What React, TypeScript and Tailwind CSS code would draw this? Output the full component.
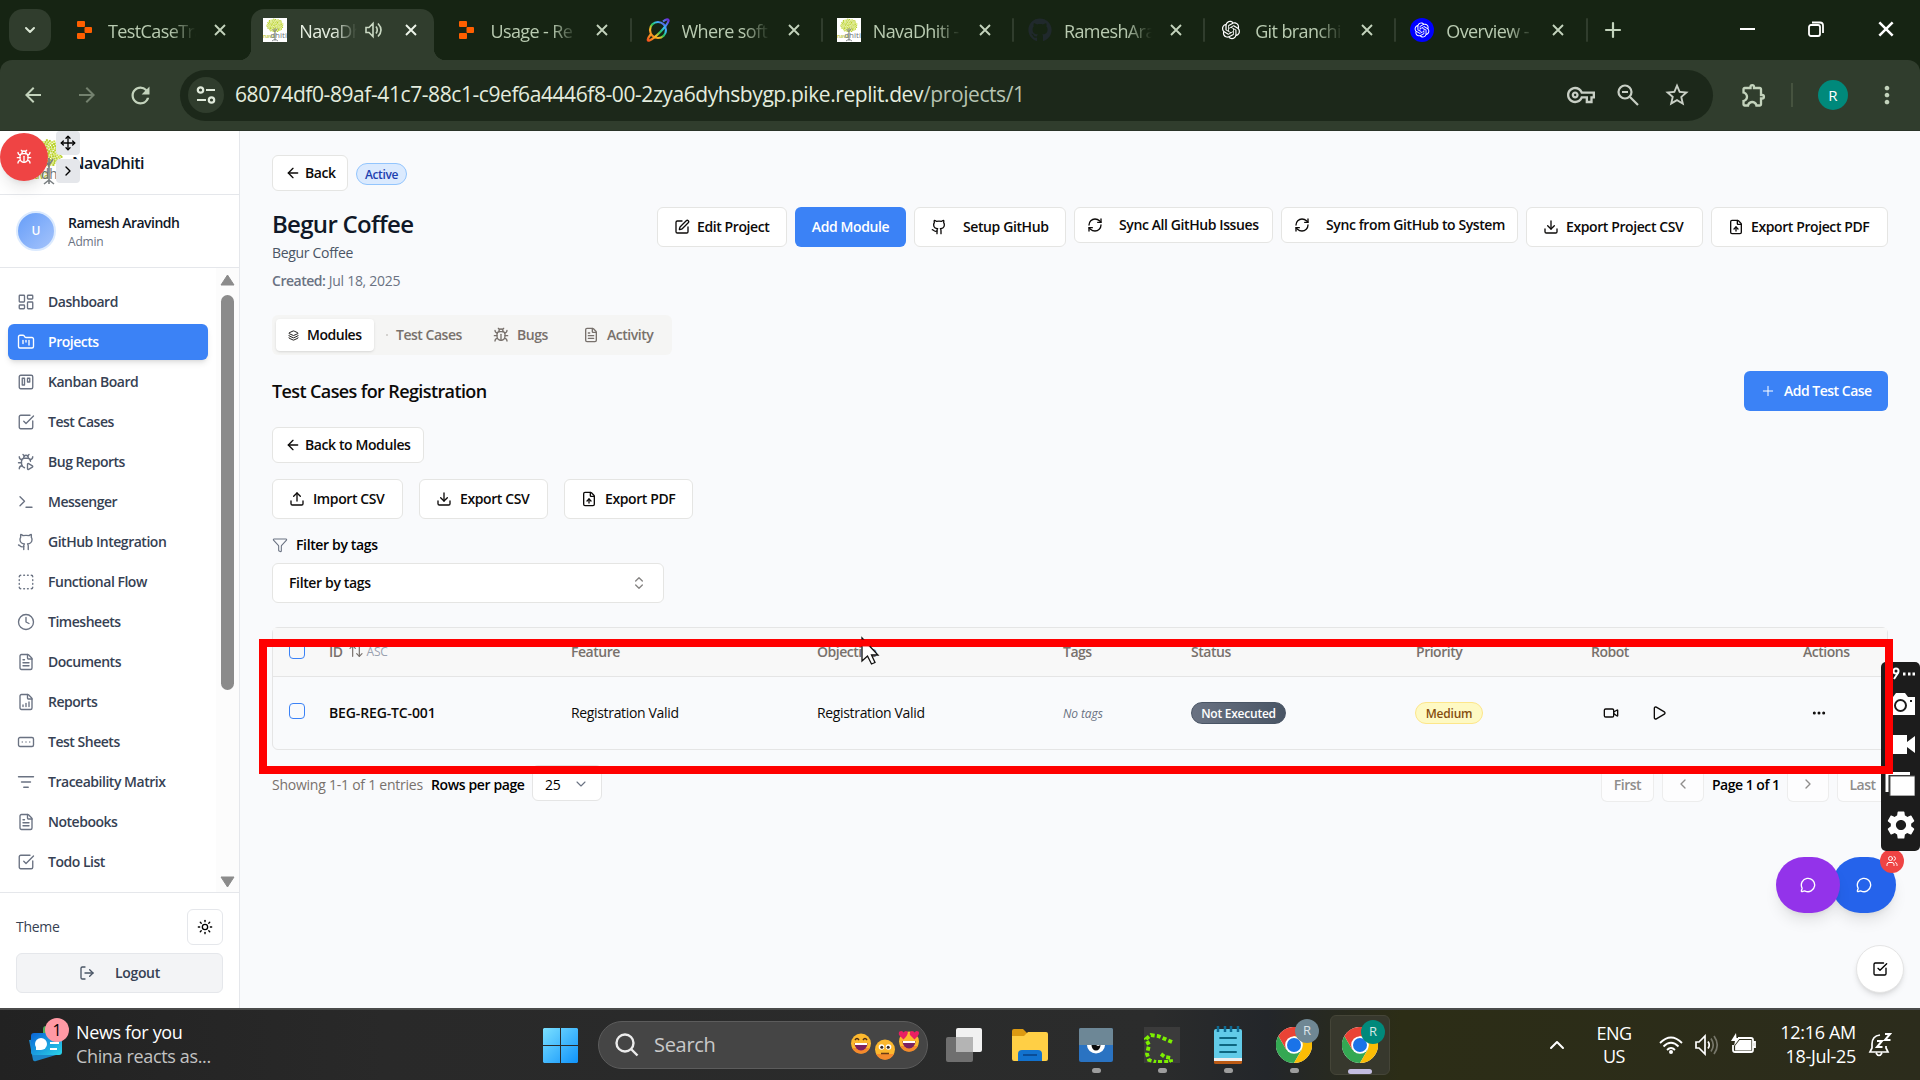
import React from "react";
import {
  ArrowLeft, ArrowUpDown, Bug, BugPlay, ChevronDown, ChevronLeft, ChevronRight, ChevronUp, ChevronsUpDown, Clock,
  Download, Ellipsis, FileChartColumnIncreasing, FileText, FileUp, Filter, FolderKanban, Github, Layers,
  LayoutDashboard, ListFilter, LogOut, MessageCircle, Move, Play, Plus, RectangleEllipsis, RefreshCw, SquareCheckBig,
  SquareDashed, SquarePen, Sun, Terminal, Trello, Upload, Users, Video,
} from "lucide-react";
import { MdArrowBack, MdArrowForward, MdMoreVert, MdOutlineExtension, MdOutlineVpnKey, MdRefresh, MdSettings, MdStarOutline } from "react-icons/md";
import { RiOpenaiFill } from "react-icons/ri";
import { FaGithub } from "react-icons/fa";

/* ---------- small drawings ---------- */

const dots = Array.from({ length: 110 }, (_, i) => {
  const a = i * 2.4;
  const r = Math.sqrt(i / 110) * 14;
  return { x: 20 + Math.cos(a) * r, y: 15 + Math.sin(a) * r * 0.95 };
});

function TreeLogo({ className }: { className: string }) {
  return (
    <svg viewBox="0 0 40 48" className={className} preserveAspectRatio="none">
      <rect width="40" height="48" fill="#fff" />
      {dots.map((d, i) => (
        <rect key={i} x={d.x - 1} y={d.y - 1} width="2" height="2" fill={i % 3 ? "#b9d12c" : "#cfe04a"} />
      ))}
      <path d="M20 46V20M20 28l-4-6M20 27l4-6M20 42l-5 4M20 42l5 4" stroke="#7b8083" strokeWidth="1.600" fill="none" />
      <text x="0" y="41" fontSize="12" fontWeight="600" textLength="20" lengthAdjust="spacingAndGlyphs" fill="#b9c637" fontFamily="Open Sans">nava</text>
      <text x="12" y="41" fontSize="14" textLength="28" lengthAdjust="spacingAndGlyphs" fill="#6f7478" fontFamily="Open Sans">dhiti</text>
    </svg>
  );
}

function ReplitMark() {
  return (
    <svg viewBox="0 0 24 24" className="size-6">
      <rect x="5" y="3" width="8" height="6" rx="1" fill="#ff5f00" />
      <rect x="12.500" y="9" width="7.500" height="6" rx="1" fill="#ff5f00" />
      <rect x="5" y="15" width="8" height="6" rx="1" fill="#ff5f00" />
    </svg>
  );
}

function OrbitMark() {
  return (
    <svg viewBox="0 0 24 24" className="size-6" fill="none" strokeWidth="2.2">
      <defs>
        <linearGradient id="orbit" x1="0" y1="1" x2="1" y2="0">
          <stop offset="0" stopColor="#f4511e" />
          <stop offset=".3" stopColor="#fbbf24" />
          <stop offset=".5" stopColor="#22c55e" />
          <stop offset=".7" stopColor="#38bdf8" />
          <stop offset="1" stopColor="#6d28d9" />
        </linearGradient>
      </defs>
      <circle cx="12" cy="12" r="8" stroke="url(#orbit)" />
      <path d="M5 16C1 21 1 23.500 3.500 22.500C9 20 21 8 22.500 3C23 .5 20 1 17 3.500" stroke="url(#orbit)" />
    </svg>
  );
}

function ChromeLogo() {
  return (
    <svg viewBox="0 0 36 36" className="size-9">
      <circle cx="18" cy="18" r="18" fill="#fff" />
      <path d="M2.400 9L10.200 22.500L25.800 22.500L18 36A18 18 0 0 1 2.400 9Z" fill="#34a853" />
      <path d="M2.400 9A18 18 0 0 1 33.600 9H18L10.200 22.500Z" fill="#ea4335" />
      <path d="M18 9H33.600A18 18 0 0 1 18 36L25.800 22.500Z" fill="#fbbc05" />
      <circle cx="18" cy="18" r="8.800" fill="#fff" />
      <circle cx="18" cy="18" r="7" fill="#1a73e8" />
    </svg>
  );
}

function NewsIcon() {
  return (
    <svg viewBox="0 0 36 44" className="h-11 w-9">
      <defs>
        <linearGradient id="news" x1="0" y1="0" x2="1" y2="1">
          <stop offset="0" stopColor="#0a64d6" />
          <stop offset="1" stopColor="#2bd4e8" />
        </linearGradient>
      </defs>
      <rect x="15" y="8" width="16" height="14" rx="3" fill="#4cae5a" />
      <path d="M1 22L5 42Q6 44 8 43L28 37V20Z" fill="#1c86c9" />
      <rect x="3" y="15" width="31" height="22" rx="3" fill="url(#news)" />
      <circle cx="13" cy="26" r="6" fill="#fff" />
      <path d="M8 32V26H13V32Z" fill="#fff" />
      <path d="M22 25h9M22 31h7" stroke="#fff" strokeWidth="2.200" />
    </svg>
  );
}

function Face({ kind }: { kind: "grin" | "flat" | "love" }) {
  return (
    <svg viewBox="0 0 22 24" className="h-6 w-[22px]">
      <circle cx="11" cy="12.500" r="10" fill="#fcb82e" />
      <path d="M2 17a10 10 0 0 0 18 0" fill="#f58a2c" />
      {kind === "flat" ? (
        <g>
          <circle cx="7.500" cy="10" r="2.800" fill="#fff" />
          <circle cx="14.500" cy="10" r="2.800" fill="#fff" />
          <circle cx="7.800" cy="10.200" r="1.500" fill="#3b2a20" />
          <circle cx="14.200" cy="10.200" r="1.500" fill="#3b2a20" />
          <path d="M7 16.500h8" stroke="#6b3b14" strokeWidth="1.500" />
        </g>
      ) : (
        <>
          <path d="M4.500 12h13a6.500 7.500 0 0 1-13 0Z" fill="#7c2160" />
          <path d="M5 12h12v2h-12Z" fill="#fff" />
        </>
      )}
      {kind === "grin" && <path d="M5 9q2-3 4 0M13 9q2-3 4 0" stroke="#4a2c17" strokeWidth="1.400" fill="none" />}
      {kind === "love" && (
        <path d="M5.500 10.500L1 6Q0 2 3.500 2Q5 2 5.500 3.500Q7 1 9.500 2.500Q11 5 5.500 10.500ZM16.500 10.500L12 6Q11 2 14 2Q16 2 16.500 3.500Q18 1 20.500 2.500Q22.500 5 16.500 10.500Z" fill="#e91e63" />
      )}
    </svg>
  );
}

function XMark({ className }: { className: string }) {
  return (
    <svg viewBox="0 0 12 12" className={className} stroke="currentColor" strokeWidth="1.900">
      <path d="M1 1L11 11M11 1L1 11" />
    </svg>
  );
}

/* ---------- browser chrome ---------- */

type BrowserTab = { title: string; icon: React.ReactNode; active?: boolean; sep?: boolean };

const browserTabs: BrowserTab[] = [
  { title: "TestCaseTra", icon: <ReplitMark /> },
  { title: "NavaDh", icon: <TreeLogo className="size-6" />, active: true },
  { title: "Usage - Re", icon: <ReplitMark /> },
  { title: "Where soft", icon: <OrbitMark />, sep: true },
  { title: "NavaDhiti -", icon: <TreeLogo className="size-6" />, sep: true },
  { title: "RameshAra", icon: <FaGithub className="size-6 text-[#20292c]" />, sep: true },
  { title: "Git branchi", icon: <RiOpenaiFill className="size-[22px] text-white" />, sep: true },
  {
    title: "Overview -",
    icon: (
      <span className="flex size-6 items-center justify-center rounded-full bg-[#0000ff]">
        <RiOpenaiFill className="size-[18px] text-white" />
      </span>
    ),
    sep: true,
  },
];

function BrowserTabs() {
  return (
    <div className="flex h-[60px] bg-[#162413] pl-[9px]">
      <div className="mt-[9px] flex size-[42px] items-center justify-center rounded-[14px] bg-[#303d2d] text-[#dbe7d5]">
        <ChevronDown className="size-4" strokeWidth={3} />
      </div>
      <div className="ml-[5px] flex">
        {browserTabs.map((t, i) => (
          <div key={i} className="relative flex w-[191.200px] pt-[9px]">
            {t.sep && <span className="absolute left-0 top-[18px] h-6 w-[2px] rounded bg-[#303d2d]" />}
            {t.active && (
              <>
                <span className="absolute bottom-0 left-[-8px] size-3 bg-[radial-gradient(circle_at_top_left,transparent_12px,#303d2d_12.500px)]" />
                <span className="absolute bottom-0 right-[-8px] size-3 bg-[radial-gradient(circle_at_top_right,transparent_12px,#303d2d_12.500px)]" />
              </>
            )}
            <div className={t.active ? "mx-1 flex flex-1 items-start rounded-t-[13px] bg-[#303d2d] pl-3" : "mx-1 flex flex-1 items-start pl-3"}>
              <span className="mt-[9px] flex size-6 shrink-0 items-center justify-center">{t.icon}</span>
              <span
                className={
                  t.active
                    ? "ml-3 mt-2 w-[58px] whitespace-nowrap text-[18px] leading-7 tracking-[-0.600px] text-[#e6efe1] [mask-image:linear-gradient(90deg,#000_60%,transparent)]"
                    : "ml-3 mt-2 w-[88px] whitespace-nowrap text-[18px] leading-7 tracking-[-0.600px] text-[#b9cbb1] [mask-image:linear-gradient(90deg,#000_70%,transparent)]"
                }
              >
                {t.title}
              </span>
              {t.active && (
                <svg viewBox="0 0 20 20" className="ml-[7px] mt-[11px] size-5" fill="none" stroke="#c9d8c2" strokeWidth="1.600">
                  <path d="M2 7.500H5L9 3.500V16.500L5 12.500H2ZM12 6.500Q14.500 10 12 13.500M14 3.500Q20 10 14 16.500" />
                </svg>
              )}
              <XMark className={t.active ? "ml-[21px] mt-[15px] size-3 text-[#eef5ea]" : "ml-[18px] mt-[15px] size-3 text-[#c3d3bc]"} />
            </div>
          </div>
        ))}
      </div>
      <div className="relative flex flex-1 items-start">
        <span className="absolute left-0 top-[18px] h-6 w-[2px] rounded bg-[#303d2d]" />
        <Plus className="ml-[15px] mt-[18px] size-6 text-[#c3d3bc]" strokeWidth={2.200} />
      </div>
      <div className="mr-[26px] flex pt-[21px] text-white">
        <svg viewBox="0 0 16 16" className="size-4" stroke="currentColor" strokeWidth="2"><path d="M0 8H15" /></svg>
        <svg viewBox="0 0 16 16" className="ml-[52px] size-4" stroke="currentColor" strokeWidth="1.800" fill="none">
          <rect x="1" y="4" width="11" height="11" rx="2" /><path d="M4 1.500H12A3 3 0 0 1 15 4.500V12" />
        </svg>
        <XMark className="ml-[54px] size-4" />
      </div>
    </div>
  );
}

function AddressBar() {
  return (
    <div className="bg-[#162413]">
      <div className="flex h-[70px] items-center rounded-t-[12px] bg-[#303d2d] text-[#c3d3bc]">
        <MdArrowBack className="ml-[21px] size-6" />
        <MdArrowForward className="ml-[30px] size-6 text-[#74826f]" />
        <MdRefresh className="ml-[28px] size-[27px]" />
        <div className="ml-[26px] flex h-[51px] w-[1533px] items-center rounded-full bg-[#1c281a] pl-2">
          <span className="flex size-9 items-center justify-center rounded-full bg-[#303d2d]">
            <svg viewBox="0 0 20 20" className="size-5" fill="none" stroke="#e0eadb" strokeWidth="2.200">
              <circle cx="4.500" cy="5" r="2.700" /><path d="M10 5H19M1 15H10" /><circle cx="15.500" cy="15" r="2.700" />
            </svg>
          </span>
          <span className="ml-[11px] flex-1 whitespace-nowrap text-[21px] tracking-[-0.420px] text-[#e3ecde]">
            68074df0-89af-41c7-88c1-c9ef6a4446f8-00-2zya6dyhsbygp.pike.replit.dev<span className="text-[#b6c3b1]">/projects/1</span>
          </span>
          <MdOutlineVpnKey className="size-7 text-[#c8cfc5]" />
          <svg viewBox="0 0 24 24" className="ml-[21px] size-6" fill="none" stroke="#c8cfc5" strokeWidth="2.200">
            <circle cx="9" cy="9" r="6.500" /><path d="M14 14L22 22M6 9H12" />
          </svg>
          <MdStarOutline className="ml-[23px] mr-[22px] size-7 text-[#c8cfc5]" />
        </div>
        <MdOutlineExtension className="ml-[27px] size-7" />
        <span className="ml-[23px] h-6 w-[2px] bg-[#46533f]" />
        <span className="ml-[25px] flex size-[30px] items-center justify-center rounded-full bg-[#00897b] text-[15px] text-white">R</span>
        <MdMoreVert className="ml-[25px] size-7" />
      </div>
    </div>
  );
}

/* ---------- sidebar ---------- */

const navItems = [
  { label: "Dashboard", Icon: LayoutDashboard },
  { label: "Projects", Icon: FolderKanban, active: true },
  { label: "Kanban Board", Icon: Trello },
  { label: "Test Cases", Icon: SquareCheckBig },
  { label: "Bug Reports", Icon: BugPlay },
  { label: "Messenger", Icon: Terminal },
  { label: "GitHub Integration", Icon: Github },
  { label: "Functional Flow", Icon: SquareDashed },
  { label: "Timesheets", Icon: Clock },
  { label: "Documents", Icon: FileText },
  { label: "Reports", Icon: FileChartColumnIncreasing },
  { label: "Test Sheets", Icon: RectangleEllipsis },
  { label: "Traceability Matrix", Icon: ListFilter },
  { label: "Notebooks", Icon: FileText },
  { label: "Todo List", Icon: SquareCheckBig },
];

function Sidebar() {
  return (
    <aside className="flex w-60 flex-col border-r border-gray-200 bg-white">
      <div className="relative flex h-16 shrink-0 items-center border-b border-gray-200 pl-[72px]">
        <TreeLogo className="absolute left-[29px] top-[7px] h-12 w-10" />
        <span className="text-[16px] font-semibold tracking-[-0.550px] text-gray-900">NavaDhiti</span>
        <span className="absolute left-0 top-[2px] flex size-12 items-center justify-center rounded-full bg-[#ef4444] shadow-lg">
          <Bug className="size-4 text-white" />
        </span>
        <span className="absolute left-14 top-0 flex size-6 items-center justify-center rounded bg-gray-200"><Move className="size-4" /></span>
        <span className="absolute left-14 top-7 flex size-6 items-center justify-center rounded bg-gray-200"><ChevronRight className="size-4" /></span>
      </div>
      <div className="flex h-[73px] shrink-0 items-center border-b border-gray-200 pl-4">
        <span className="flex size-10 items-center justify-center rounded-full border-2 border-blue-100 bg-gradient-to-br from-[#669df8] to-[#a5c4fb] text-[12px] font-semibold text-white">U</span>
        <div className="ml-3 flex flex-col">
          <span className="text-[14px] font-semibold leading-5 tracking-[-0.520px] text-gray-900">Ramesh Aravindh</span>
          <span className="mt-px text-[12px] leading-4 tracking-[-0.200px] text-gray-500">Admin</span>
        </div>
      </div>
      <div className="flex min-h-0 flex-1">
        <nav className="flex w-[216px] flex-col gap-1 px-2 pt-4">
          {navItems.map(({ label, Icon, active }) => (
            <div
              key={label}
              className={
                active
                  ? "flex h-9 w-[200px] shrink-0 items-center rounded-md bg-[#3b82f6] pl-[9px] text-white shadow-md"
                  : "flex h-9 w-[200px] shrink-0 items-center rounded-md pl-[9px] text-gray-700"
              }
            >
              <Icon className={active ? "size-[18px]" : "size-[18px] text-gray-500"} strokeWidth={1.800} />
              <span className="mb-[2px] ml-[13px] whitespace-nowrap text-[14px] font-semibold tracking-[-0.480px]">{label}</span>
            </div>
          ))}
        </nav>
        <div className="flex flex-1 flex-col items-center bg-[#fcfcfc] pt-[6px]">
          <svg viewBox="0 0 15 12" className="h-3 w-[15px]"><path d="M7.500 1L14 11H1Z" fill="#8b8b8b" stroke="#8b8b8b" strokeLinejoin="round" /></svg>
          <span className="mt-[9px] h-[395px] w-[13px] rounded-full bg-[#8b8b8b]" />
          <svg viewBox="0 0 15 12" className="mb-[4px] mt-auto h-3 w-[15px]"><path d="M7.500 11L14 1H1Z" fill="#8b8b8b" stroke="#8b8b8b" strokeLinejoin="round" /></svg>
        </div>
      </div>
      <div className="h-[116px] shrink-0 border-t border-gray-200 px-4 pt-4">
        <div className="flex h-9 items-center justify-between">
          <span className="mb-px text-[14px] tracking-[-0.300px] text-gray-700">Theme</span>
          <span className="flex size-9 items-center justify-center rounded-md border border-gray-200"><Sun className="size-4" /></span>
        </div>
        <div className="mt-2 flex h-10 items-center rounded-md border border-gray-200 bg-gray-100 pl-[62px] text-gray-600">
          <LogOut className="size-4" />
          <span className="mb-px ml-5 text-[14px] font-semibold tracking-[-0.340px] text-gray-700">Logout</span>
        </div>
      </div>
    </aside>
  );
}

/* ---------- project page ---------- */

function Button({ className, icon, children }: { className: string; icon?: React.ReactNode; children: React.ReactNode }) {
  return (
    <div className={`flex shrink-0 items-center whitespace-nowrap rounded-md border border-[#e5e5e3] bg-white text-[14px] font-semibold tracking-[-0.400px] text-[#0c0a09] ${className}`}>
      {icon}
      <span className="mb-[2px]">{children}</span>
    </div>
  );
}

function ProjectHeader() {
  return (
    <div className="flex h-10 items-start justify-between">
      <h1 className="text-[24px] font-semibold leading-[34px] tracking-[-0.700px] text-gray-900">Begur Coffee</h1>
      <div className="flex gap-2">
        <Button className="h-10 w-[130px] pl-4" icon={<SquarePen className="mr-[7px] size-4" />}>Edit Project</Button>
        <div className="flex h-10 w-[111px] items-center justify-center whitespace-nowrap rounded-md bg-[#3b82f6] pb-px text-[14px] font-semibold tracking-[-0.400px] text-white">Add Module</div>
        <Button className="h-10 w-[152px] pl-4" icon={<Github className="mr-4 size-4" />}>Setup GitHub</Button>
        <Button className="h-9 w-[199px] pl-3" icon={<RefreshCw className="mr-4 size-4" />}>Sync All GitHub Issues</Button>
        <Button className="h-9 w-[237px] pl-3" icon={<RefreshCw className="mr-4 size-4" />}>Sync from GitHub to System</Button>
        <Button className="h-10 w-[177px] pl-4" icon={<Download className="mr-[7px] size-4" />}>Export Project CSV</Button>
        <Button className="h-10 w-[177px] pl-4" icon={<FileUp className="mr-[7px] size-4" />}>Export Project PDF</Button>
      </div>
    </div>
  );
}

const cols = "grid grid-cols-[40px_242px_246px_246px_128px_225px_175px_212px_1fr] pl-4";

function CasesTable() {
  return (
    <div className="mt-6 h-[123px] rounded-md border border-[#e5e5e5] text-[14px]">
      <div className={`${cols} h-[49px] items-center border-b border-[#e5e5e5] bg-[#f8f8f8] pb-[2px] font-semibold tracking-[-0.480px] text-[#78716c]`}>
        <span className="size-4 rounded border border-[#3b82f6]" />
        <span className="flex items-center">ID<ArrowUpDown className="ml-[5px] size-4" strokeWidth={1.800} /><span className="ml-[3px] mt-[2px] text-[12px] font-normal tracking-[-0.200px] text-gray-400">ASC</span></span>
        <span>Feature</span>
        <span>Objective</span>
        <span>Tags</span>
        <span>Status</span>
        <span>Priority</span>
        <span>Robot</span>
        <span>Actions</span>
      </div>
      <div className={`${cols} h-[72px] items-center tracking-[-0.340px] text-[#0c0a09]`}>
        <span className="mb-1 size-4 rounded border border-[#3b82f6]" />
        <span className="mb-px font-semibold tracking-[-0.130px]">BEG-REG-TC-001</span>
        <span className="mb-px">Registration Valid</span>
        <span className="mb-px">Registration Valid</span>
        <span className="mt-[2px] text-[12px] italic tracking-[-0.100px] text-gray-500">No tags</span>
        <span className="flex h-[22px] w-[95px] items-center justify-center rounded-full border border-gray-600 bg-gradient-to-r from-gray-500 to-gray-600 pt-[2px] text-[12px] font-semibold tracking-[-0.240px] text-white">Not Executed</span>
        <span className="-ml-px flex h-[22px] w-[68px] items-center justify-center rounded-full border border-[#fde68a] bg-[#fef9c3] pt-[2px] text-[12px] font-semibold tracking-[-0.200px] text-[#854d0e]">Medium</span>
        <span className="flex gap-8 pl-3"><Video className="size-4" /><Play className="size-4" /></span>
        <span className="pl-2"><Ellipsis className="size-4" strokeWidth={2.500} /></span>
      </div>
    </div>
  );
}

function Pagination() {
  const pager = "flex h-9 items-center justify-center rounded-md border border-[#e5e5e5]/70 bg-white/60 text-[#8f8d8c]";
  return (
    <div className="mt-4 flex h-9 items-center whitespace-nowrap text-[14px] tracking-[-0.240px]">
      <span className="w-[159px] text-[#78716c]">Showing 1-1 of 1 entries</span>
      <span className="w-[101px] font-semibold tracking-[-0.380px]">Rows per page</span>
      <div className="mb-[2px] flex h-9 w-[70px] items-center justify-between rounded-md border border-[#e5e5e5] bg-white px-3 pt-[2px]">
        25<ChevronDown className="size-4 text-gray-500" strokeWidth={1.600} />
      </div>
      <div className="ml-auto flex items-center gap-2 font-semibold tracking-[-0.500px]">
        <div className={`${pager} w-[53px]`}>First</div>
        <div className={`${pager} w-[42px]`}><ChevronLeft className="size-4" /></div>
        <span className="w-[67px] text-center">Page 1 of 1</span>
        <div className={`${pager} w-[42px]`}><ChevronRight className="size-4" /></div>
        <div className={`${pager} w-[51px]`}>Last</div>
      </div>
    </div>
  );
}

function ProjectPage() {
  return (
    <main className="flex-1 bg-[#f9fafc] px-8 pt-6">
      <div className="flex h-9 items-center">
        <Button className="h-9 w-[76px] pl-3" icon={<ArrowLeft className="mr-1 size-4" />}>Back</Button>
        <span className="ml-2 mt-[2px] flex h-[22px] w-[51px] items-center justify-center rounded-full border border-[#93c5fd] bg-[#dbeafe] pt-px text-[12px] font-semibold tracking-[-0.400px] text-[#1e40af]">Active</span>
      </div>
      <div className="mt-4"><ProjectHeader /></div>
      <p className="-mt-1 text-[14px] leading-5 tracking-[-0.320px] text-gray-600">Begur Coffee</p>
      <p className="mt-2 text-[14px] leading-5 tracking-[-0.280px] text-gray-500"><b className="font-semibold tracking-[-0.480px]">Created:</b> Jul 18, 2025</p>

      <div className="mt-6 flex h-10 w-[400px] items-center rounded-md bg-[#f5f5f4] p-1 text-[14px] font-semibold tracking-[-0.480px] text-[#78716c]">
        <span className="flex h-8 w-[98px] items-center whitespace-nowrap rounded bg-white pl-3 text-[#0c0a09] shadow-sm"><Layers className="mr-2 size-[11px]" /><span className="mb-[2px]">Modules</span></span>
        <span className="ml-3 size-[2px] rounded-full bg-[#c9c6c3]" />
        <span className="mb-[2px] ml-[8px] w-[97px] whitespace-nowrap">Test Cases</span>
        <span className="flex w-[90px] items-center"><Bug className="mr-2 size-4" /><span className="mb-[2px]">Bugs</span></span>
        <span className="flex items-center"><FileText className="mr-2 size-4" /><span className="mb-[2px]">Activity</span></span>
      </div>

      <div className="mt-4 flex h-10 items-center justify-between">
        <h2 className="text-[18px] font-semibold tracking-[-0.610px] text-[#0c0a09]">Test Cases for Registration</h2>
        <div className="flex h-10 w-36 items-center whitespace-nowrap rounded-md bg-[#3b82f6] pl-4 text-[14px] font-semibold tracking-[-0.500px] text-white"><Plus className="mr-2 size-4" strokeWidth={1.500} /><span className="mb-[2px]">Add Test Case</span></div>
      </div>
      <Button className="mt-4 h-9 w-[152px] pl-3" icon={<ArrowLeft className="mr-1 size-4" />}>Back to Modules</Button>
      <div className="mt-4 flex gap-4">
        <Button className="h-10 w-[131px] pl-4" icon={<Upload className="mr-2 size-4" />}>Import CSV</Button>
        <Button className="h-10 w-[129px] pl-4" icon={<Download className="mr-2 size-4" />}>Export CSV</Button>
        <Button className="h-10 w-[129px] pl-4" icon={<FileUp className="mr-2 size-4" />}>Export PDF</Button>
      </div>
      <div className="mt-4 flex h-5 items-center text-[14px] font-semibold tracking-[-0.360px]"><Filter className="mr-2 size-4 text-gray-500" strokeWidth={1.600} /><span className="mb-[2px]">Filter by tags</span></div>
      <div className="mt-2 flex h-10 w-[392px] items-center justify-between rounded-md border border-[#e5e5e3] bg-white px-4 text-[14px] font-semibold tracking-[-0.360px] text-[#0c0a09]">
        <span className="mb-[2px]">Filter by tags</span>
        <ChevronsUpDown className="size-4 text-[#858382]" />
      </div>
      <CasesTable />
      <Pagination />
    </main>
  );
}

/* ---------- floating overlays ---------- */

function Floating() {
  return (
    <>
      <span className="absolute left-[1832px] top-[857px] flex h-14 w-16 items-center justify-center rounded-[28px] bg-[#2563eb] shadow-lg"><MessageCircle className="size-4 text-white" /></span>
      <span className="absolute left-[1776px] top-[857px] flex h-14 w-16 items-center justify-center rounded-[28px] bg-[#9333ea] shadow-lg"><MessageCircle className="size-4 text-white" /></span>
      <span className="absolute left-[1880px] top-[849px] flex size-6 items-center justify-center rounded-full bg-[#ef4444]"><Users className="size-3 text-white" /></span>
      <span className="absolute left-[1856px] top-[945px] flex size-12 items-center justify-center rounded-full border border-[#e5e5e5] bg-white shadow-md"><SquareCheckBig className="size-4" /></span>
      <div className="absolute left-[1881px] top-[662px] flex h-[189px] w-[39px] flex-col items-end overflow-hidden rounded-[5px] bg-[#1c1c1c] pr-[5px] text-white">
        <svg viewBox="0 0 34 16" className="mt-[5px] h-4 w-[34px] shrink-0" fill="none" stroke="#fff" strokeWidth="2">
          <circle cx="15" cy="4" r="2.500" /><path d="M17 6L13 12M9 2L11 11" />
          <path d="M22 7h2.500M27 7h2.500M31.500 7h2.500" strokeWidth="3" />
        </svg>
        <svg viewBox="0 0 28 24" className="mt-[10px] h-6 w-7 shrink-0">
          <path d="M0 4H6L9 0H18L21 4H28V22H0Z" fill="#fff" /><circle cx="13.500" cy="12.500" r="5.500" fill="none" stroke="#1c1c1c" strokeWidth="2" /><rect x="23" y="7" width="2" height="2" fill="#1c1c1c" />
        </svg>
        <svg viewBox="0 0 28 20" className="mt-[18px] h-5 w-7 shrink-0" fill="#fff"><path d="M0 0H20V7L28 1V18L20 12V19H0Z" /></svg>
        <svg viewBox="0 0 30 24" className="mt-[17px] h-6 w-[30px] shrink-0"><path d="M2 20V1.500H25" fill="none" stroke="#fff" strokeWidth="3" /><rect x="5" y="4" width="25" height="20" fill="#fff" stroke="#555" strokeWidth="1" /></svg>
        <MdSettings className="mr-[-3px] mt-[12px] size-[34px] shrink-0" />
      </div>
      <div className="absolute left-[259px] top-[639px] h-[135px] w-[1634px] border-8 border-[#ff0000]" />
      <svg viewBox="0 0 20 30" className="absolute left-[860px] top-[636px] h-[30px] w-5">
        <path d="M2 2V25L7.500 20L11.500 28L15 26.500L11.500 19H18Z" fill="#fff" stroke="#111" strokeWidth="1.300" />
        <path d="M0 3.500H10V10.500H0Z" fill="#ff0000" />
      </svg>
    </>
  );
}

/* ---------- taskbar ---------- */

function TaskApp({ children, dot }: { children: React.ReactNode; dot?: boolean }) {
  return (
    <span className="relative flex h-full w-[66px] items-center justify-center">
      {children}
      {dot && <span className="absolute bottom-[7px] h-[5px] w-[9px] rounded-full bg-[#9d9d9d]" />}
    </span>
  );
}

function Taskbar() {
  return (
    <footer className="flex h-[72px] items-center border-t-2 border-[#4b4b4b] bg-[linear-gradient(90deg,#222222_0%,#292929_20%,#2b2c2c_60%,#23262a_66%,#2c2d16_73%,#2c2c1c_100%)] text-white">
      <div className="relative ml-[28px] h-full w-9">
        <div className="absolute top-[8px]"><NewsIcon /></div>
        <span className="absolute left-[17px] top-[8px] flex size-6 items-center justify-center rounded-full bg-[#ff99a4] text-[16px] text-black">1</span>
      </div>
      <div className="mb-[3px] ml-3 w-[467px] whitespace-nowrap text-[18px] leading-6 tracking-[-0.350px]">
        <div>News for you</div>
        <div className="text-[#c3c3c3]">China reacts as...</div>
      </div>
      <svg viewBox="0 0 35 35" className="size-[35px]">
        <defs><linearGradient id="win" x1="0" y1="0" x2="1" y2="1"><stop offset="0" stopColor="#7be0ff" /><stop offset="1" stopColor="#0f93fb" /></linearGradient></defs>
        <path d="M1 0H17V17H0V1ZM18 0H34L35 1V17H18ZM0 18H17V35H1L0 34ZM18 18H35V34L34 35H18Z" fill="url(#win)" />
      </svg>
      <div className="ml-5 flex h-12 w-[330px] items-center rounded-full border border-[#5c5c5c] bg-[#454545] pl-4">
        <svg viewBox="0 0 24 24" className="size-6" fill="none" stroke="#ececec" strokeWidth="2.400"><circle cx="10" cy="10" r="8.500" /><path d="M16 16L22.500 22.500" /></svg>
        <span className="mb-px ml-[15px] flex-1 text-[20px] tracking-[-0.300px] text-[#c9c9c9]">Search</span>
        <span className="mb-1"><Face kind="grin" /></span>
        <span className="ml-[2px] mt-2"><Face kind="flat" /></span>
        <span className="mb-2 ml-[2px] mr-[7px]"><Face kind="love" /></span>
      </div>
      <div className="ml-[3px] flex h-full items-center">
        <TaskApp>
          <svg viewBox="0 0 36 34" className="h-[34px] w-9"><rect x="10" y="0" width="26" height="24" rx="2" fill="#f1f1f1" /><rect x="0" y="9" width="27" height="25" rx="2" fill="#6f6f6f" /><rect x="10" y="9" width="17" height="15" fill="#b4b4b4" /></svg>
        </TaskApp>
        <TaskApp>
          <svg viewBox="0 0 36 34" className="h-[34px] w-9"><path d="M0 3Q0 1 2 1H11L15 5V12H0Z" fill="#dc9a12" /><path d="M0 8H12L16 4H34Q36 4 36 6V31Q36 33 34 33H2Q0 33 0 31Z" fill="#ffcf45" /><path d="M6 33V26Q6 22 10 22H26Q30 22 30 26V33Z" fill="#1272ce" /><path d="M11 27H25" stroke="#0a4d97" strokeWidth="2" /></svg>
        </TaskApp>
        <TaskApp dot>
          <svg viewBox="0 0 34 34" className="size-[34px]"><rect width="34" height="34" rx="2" fill="#2a73c2" /><path d="M0 2Q0 0 2 0H32Q34 0 34 2V17H0Z" fill="#6d8796" /><path d="M8 17H26A9 8.500 0 0 1 8 17Z" fill="#fff" /><path d="M12.500 17A4.500 5.500 0 0 0 21.500 17L19 18L17 17Z" fill="#0a0a0a" /></svg>
        </TaskApp>
        <TaskApp dot>
          <svg viewBox="0 0 36 36" className="size-9"><rect width="36" height="36" fill="#3b3b3b" /><path d="M28 15L14 9L7 8L2 12L5 18L3 27L5 33L12 35M17 27L21 30L27 31V35M14 35H27" fill="none" stroke="#7cf000" strokeWidth="3.800" strokeDasharray="4 2.200" /></svg>
        </TaskApp>
        <TaskApp dot>
          <svg viewBox="0 0 30 38" className="h-[38px] w-[30px]"><rect x="1" y="3" width="28" height="31" rx="2" fill="#62cbe8" /><rect x="1" y="32" width="28" height="3" fill="#eee" /><path d="M1 35H29V37Q29 38 27 38H3Q1 38 1 37Z" fill="#bb5a14" /><path d="M5 12H25M5 19H25M5 26H25" stroke="#0d6680" strokeWidth="2.200" transform="translate(2 0) scale(.87 1)" /><path d="M5 0V6M12 0V6M18 0V6M25 0V6" stroke="#0f6c94" strokeWidth="2.500" /></svg>
        </TaskApp>
        <TaskApp dot>
          <ChromeLogo />
          <span className="absolute right-[8px] top-[9px] flex size-6 items-center justify-center rounded-full bg-[#6f8794] text-[13px] text-[#dbe3e8]">R</span>
        </TaskApp>
        <span className="relative ml-[3px] flex h-[60px] w-[60px] items-center justify-center rounded-md border border-[#454538] bg-[#37382d]">
          <ChromeLogo />
          <span className="absolute right-[4px] top-[4px] flex size-6 items-center justify-center rounded-full bg-[#00897b] text-[13px] text-[#d5e8e5]">R</span>
          <span className="absolute bottom-0 h-[5px] w-6 rounded-full bg-[#c3bde0]" />
        </span>
      </div>
      <div className="ml-auto flex items-center text-[18px] leading-[23px] tracking-[-0.500px]">
        <ChevronUp className="size-6" />
        <div className="ml-[20px] w-[50px] text-center">ENG<br />US</div>
        <svg viewBox="0 0 24 20" className="ml-[20px] h-5 w-6" fill="none" stroke="#fff" strokeWidth="1.800"><path d="M1 8Q12-3 23 8M4.500 11.500Q12 4 19.500 11.500M8 15Q12 11 16 15" /><circle cx="12" cy="17" r="2" fill="#fff" stroke="none" /></svg>
        <svg viewBox="0 0 26 22" className="ml-3 h-[22px] w-[26px]" fill="none" stroke="#fff" strokeWidth="1.700"><path d="M1 8H4L10 2V20L4 14H1ZM13 7.500Q15.500 11 13 14.500" /><path d="M16 4.500Q20.500 11 16 17.500M19 2Q25.500 11 19 20" stroke="#77776a" /></svg>
        <svg viewBox="0 0 26 22" className="mb-[2px] ml-[10px] h-[22px] w-[26px]" fill="none" stroke="#fff" strokeWidth="1.800"><path d="M7 5H20Q22 5 22 7V17Q22 19 20 19H4Q2 19 2 17V12M22 9H24V14H22" /><path d="M9 8H19.500V16.500H5V13Z" fill="#fff" /><path d="M5 0L0 8H4L3 13L9 5H5.500Z" fill="#fff" stroke="none" /></svg>
        <div className="mb-[3px] ml-[9px] w-[90px] whitespace-nowrap text-right text-[18px] leading-6 tracking-[-0.300px]">12:16 AM<br />18-Jul-25</div>
        <svg viewBox="0 0 24 26" className="ml-3 mr-[28px] h-[26px] w-6" fill="none" stroke="#fff" strokeWidth="1.700"><path d="M12 3Q4 4 4 12V16L2 20H20L18 16V14M8 21Q11 26 14 21" /><path d="M9 9H14L9 15H14.500M17 2H22L17 8H22.500" strokeWidth="2" /></svg>
      </div>
    </footer>
  );
}

export default function App() {
  return (
    <div className="relative flex h-[1080px] w-[1920px] flex-col overflow-hidden font-['Open_Sans','Noto_Sans',sans-serif]">
      <BrowserTabs />
      <AddressBar />
      <div className="flex min-h-0 flex-1 border-t border-[#2a3328]">
        <Sidebar />
        <ProjectPage />
      </div>
      <Taskbar />
      <Floating />
    </div>
  );
}
